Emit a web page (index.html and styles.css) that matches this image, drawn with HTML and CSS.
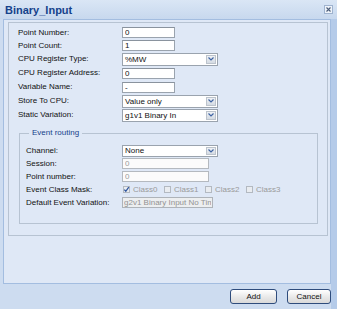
FILE: index.html
```html
<!DOCTYPE html>
<html>
<head>
<meta charset="utf-8">
<link rel="stylesheet" href="styles.css">
</head>
<body>
<div class="window">
  <div class="titlebar">
    <span class="title">Binary_Input</span>
    <span class="close"><svg width="9" height="9" viewBox="0 0 9 9"><rect x="0.5" y="0.5" width="8" height="8" fill="#eef3fa" stroke="#9fb3cf"/><path d="M2.5 2.5 L6.5 6.5 M6.5 2.5 L2.5 6.5" stroke="#4c5d78" stroke-width="1.1"/></svg></span>
  </div>
  <div class="main">
    <div class="panel">
      <div class="group">
        <div class="form">
          <label class="lbl">Point Number:</label><input class="txt w52" type="text" value="0">
          <label class="lbl">Point Count:</label><input class="txt w52" type="text" value="1">
          <label class="lbl">CPU Register Type:</label>
          <div class="select"><span class="sel-text">%MW</span><span class="arrow"><svg width="6" height="4" viewBox="0 0 6 4"><path d="M0.5 0.5 L3 3 L5.5 0.5" fill="none" stroke="#3f64a3" stroke-width="1.2"/></svg></span></div>
          <label class="lbl">CPU Register Address:</label><input class="txt w52" type="text" value="0">
          <label class="lbl">Variable Name:</label><input class="txt w52" type="text" value="-">
          <label class="lbl">Store To CPU:</label>
          <div class="select"><span class="sel-text">Value only</span><span class="arrow"><svg width="6" height="4" viewBox="0 0 6 4"><path d="M0.5 0.5 L3 3 L5.5 0.5" fill="none" stroke="#3f64a3" stroke-width="1.2"/></svg></span></div>
          <label class="lbl">Static Variation:</label>
          <div class="select"><span class="sel-text">g1v1 Binary In</span><span class="arrow"><svg width="6" height="4" viewBox="0 0 6 4"><path d="M0.5 0.5 L3 3 L5.5 0.5" fill="none" stroke="#3f64a3" stroke-width="1.2"/></svg></span></div>
        </div>
        <fieldset class="routing">
          <legend>Event routing</legend>
          <div class="form2">
            <label class="lbl">Channel:</label>
            <div class="select small"><span class="sel-text">None</span><span class="arrow"><svg width="6" height="4" viewBox="0 0 6 4"><path d="M0.5 0.5 L3 3 L5.5 0.5" fill="none" stroke="#3f64a3" stroke-width="1.2"/></svg></span></div>
            <label class="lbl">Session:</label><input class="txt w87 dis" type="text" value="0" disabled>
            <label class="lbl">Point number:</label><input class="txt w87 dis" type="text" value="0" disabled>
            <label class="lbl">Event Class Mask:</label>
            <div class="checks">
              <span class="cb"><span class="box"><svg width="7" height="7" viewBox="0 0 7 7"><path d="M1.3 3.6 L2.8 5.3 L5.8 1.2" fill="none" stroke="#2f56a0" stroke-width="1.3"/></svg></span><span class="cb-text">Class0</span></span>
              <span class="cb"><span class="box"></span><span class="cb-text">Class1</span></span>
              <span class="cb"><span class="box"></span><span class="cb-text">Class2</span></span>
              <span class="cb"><span class="box"></span><span class="cb-text">Class3</span></span>
            </div>
            <label class="lbl">Default Event Variation:</label><input class="txt w91 dis2" type="text" value="g2v1 Binary Input No Time" disabled>
          </div>
        </fieldset>
      </div>
    </div>
    <div class="buttons">
      <button class="btn add" type="button">Add</button>
      <button class="btn cancel" type="button">Cancel</button>
    </div>
  </div>
</div>
</body>
</html>
```

FILE: styles.css
```css
html, body {
  margin: 0;
  padding: 0;
}
body {
  width: 337px;
  height: 309px;
  overflow: hidden;
  font-family: "Liberation Sans", Arial, sans-serif;
  font-size: 8px;
  color: #111;
  background: #cbdaee;
}
.window {
  width: 337px;
  height: 309px;
  display: flex;
  flex-direction: column;
  background: #cbdaee;
}
.titlebar {
  height: 19px;
  flex: 0 0 19px;
  display: flex;
  align-items: center;
  justify-content: space-between;
  padding: 0 4px 0 5px;
  box-sizing: border-box;
  background: linear-gradient(#dae6f5, #c7d8ee);
}
.title {
  font-size: 11px;
  font-weight: bold;
  color: #15428b;
  line-height: 12px;
  margin-top: 1px;
}
.close {
  display: flex;
  width: 9px;
  height: 9px;
  margin-top: -1px;
}
.main {
  flex: 1;
  display: flex;
  flex-direction: column;
  background: linear-gradient(to right, #cddcf0 331px, #b5cbe9 331px);
}
.panel {
  margin-left: 3px;
  width: 328px;
  height: 265px;
  box-sizing: border-box;
  border: 1px solid #a3bde0;
  background: #dfe8f6;
  padding: 2px 0 0 4px;
}
.group {
  width: 320px;
  height: 214px;
  box-sizing: border-box;
  border: 1px solid #b7c3d2;
  padding: 3px 0 0 9px;
}
.form {
  display: grid;
  grid-template-columns: 104px auto;
  grid-template-rows: 13px 13px 14px 14px 14px 14px 14px;
  align-items: center;
  justify-items: start;
}
.lbl {
  line-height: 10px;
  white-space: nowrap;
}
.txt {
  font: inherit;
  height: 11px;
  box-sizing: border-box;
  border: 1px solid #9aa3ae;
  border-top-color: #8a939e;
  background: #fff;
  padding: 0 2px;
  margin: 0;
  line-height: 9px;
  color: #111;
  outline: none;
}
.w52 { width: 53px; }
.w87 { width: 87px; }
.w91 { width: 91px; }
.txt.dis {
  background: #fbfbfb;
  color: #9a9a9a;
  border-color: #b4b9bf;
}
.txt.dis2 {
  background: #eceef0;
  color: #939393;
  border-color: #aeb3b9;
  padding: 0 1px;
}
.select {
  width: 96px;
  height: 13px;
  box-sizing: border-box;
  border: 1px solid #9aa3ae;
  background: #fff;
  display: flex;
  align-items: stretch;
}
.select.small {
  height: 12px;
}
.sel-text {
  flex: 1;
  padding-left: 2px;
  line-height: 11px;
  white-space: nowrap;
  overflow: hidden;
}
.select.small .sel-text {
  line-height: 10px;
}
.arrow {
  width: 10px;
  margin: 1px;
  box-sizing: border-box;
  border: 1px solid #bcc3cc;
  background: linear-gradient(#eef1f5, #d5dbe3);
  display: flex;
  align-items: center;
  justify-content: center;
}
.routing {
  margin: 6px 0 0 1px;
  width: 299px;
  box-sizing: border-box;
  border: 1px solid #b7c3d2;
  padding: 7px 0 14px 6px;
  min-width: 0;
}
.routing legend {
  color: #15428b;
  font-size: 8px;
  line-height: 10px;
  padding: 0 3px;
  margin-left: 3px;
}
.form2 {
  display: grid;
  grid-template-columns: 96px auto;
  grid-template-rows: 12px 13px 13px 13px 13px;
  align-items: center;
  justify-items: start;
}
.checks {
  display: flex;
  align-items: center;
}
.cb {
  width: 41px;
  display: flex;
  align-items: center;
  gap: 3px;
  color: #9a9a9a;
}
.box {
  width: 7px;
  height: 7px;
  box-sizing: border-box;
  border: 1px solid #b3b9c1;
  background: #e9ecf0;
  display: flex;
  align-items: center;
  justify-content: center;
  margin-left: 1px;
}
.box svg {
  flex: 0 0 auto;
}
.cb-text {
  line-height: 10px;
}
.buttons {
  flex: 1;
  display: flex;
  justify-content: flex-end;
  align-items: flex-start;
  gap: 10px;
  padding: 5px 6px 0 0;
}
.btn {
  font: inherit;
  height: 15px;
  box-sizing: border-box;
  border: 1px solid #2e4c7c;
  border-radius: 3px;
  background: linear-gradient(#ffffff, #e6e6e6 60%, #d9d9d9);
  color: #111;
  padding: 0;
  line-height: 12px;
  margin: 0;
}
.add { width: 47px; }
.cancel { width: 44px; }
```
